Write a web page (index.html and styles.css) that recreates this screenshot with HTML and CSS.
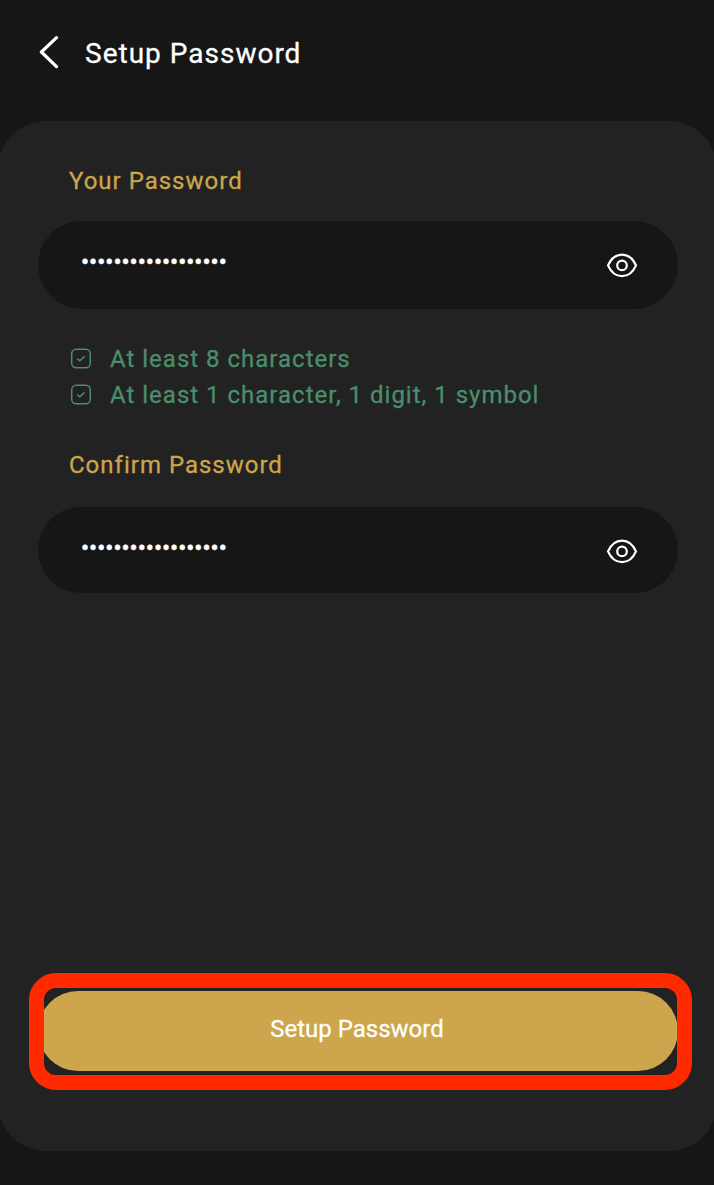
FILE: index.html
```html
<!DOCTYPE html>
<html lang="en">
<head>
    <meta charset="UTF-8">
    <meta name="viewport" content="width=device-width, initial-scale=1.0">
    <title>Setup Password</title>
    <link rel="stylesheet" href="styles.css">
</head>
<body>
    <header class="header">
        <svg class="back-icon" width="20" height="34" viewBox="0 0 20 34">
            <path d="M17.5 1.7L2.4 16L17.5 30.6" fill="none" stroke="#fff" stroke-width="3.2" stroke-linecap="round" stroke-linejoin="round"/>
        </svg>
        <h1 class="title">Setup Password</h1>
    </header>

    <main class="panel">
        <label class="label" for="password">Your Password</label>
        <div class="input-group">
            <input type="password" id="password" value="Secret-password-01">
            <svg class="eye-icon" width="32" height="26" viewBox="0 0 32 26">
                <path d="M2 13.4C5 6.6 10 2.6 16 2.6S27 6.6 30 13.4C27 20.2 22 24.2 16 24.2S5 20.2 2 13.4Z"/>
                <circle cx="16" cy="13.4" r="4.8"/>
            </svg>
        </div>

        <ul class="rules">
            <li>
                <svg class="check-icon" width="22" height="22" viewBox="0 0 22 22">
                    <rect x="1.7" y="1.2" width="18.6" height="18.6" rx="4.5"/>
                    <path d="M7.2 10.6L9.8 12.8L14.7 8.2"/>
                </svg>
                <span class="rule-text">At least 8 characters</span>
            </li>
            <li>
                <svg class="check-icon" width="22" height="22" viewBox="0 0 22 22">
                    <rect x="1.7" y="1.2" width="18.6" height="18.6" rx="4.5"/>
                    <path d="M7.2 10.6L9.8 12.8L14.7 8.2"/>
                </svg>
                <span class="rule-text">At least 1 character, 1 digit, 1 symbol</span>
            </li>
        </ul>

        <label class="label" for="confirm">Confirm Password</label>
        <div class="input-group confirm">
            <input type="password" id="confirm" value="Secret-password-01">
            <svg class="eye-icon" width="32" height="26" viewBox="0 0 32 26">
                <path d="M2 13.4C5 6.6 10 2.6 16 2.6S27 6.6 30 13.4C27 20.2 22 24.2 16 24.2S5 20.2 2 13.4Z"/>
                <circle cx="16" cy="13.4" r="4.8"/>
            </svg>
        </div>

        <div class="submit">
            <button class="submit-btn" type="button">Setup Password</button>
            <div class="highlight"></div>
        </div>
    </main>
</body>
</html>
```
FILE: styles.css
```css
* {
    box-sizing: border-box;
}
body {
    margin: 0;
    height: 1185px;
    background: #161616;
    color: #fff;
    font-family: Roboto, Arial, sans-serif;
    -webkit-text-stroke: 0.3px;
    overflow: hidden;
}
.header {
    display: flex;
    align-items: center;
    height: 121px;
    padding: 0 0 16px 39px;
}
.back-icon {
    margin-right: 26px;
}
.title {
    margin: 0;
    padding-top: 2px;
    font-size: 28px;
    font-weight: 400;
    letter-spacing: 1px;
}
.panel {
    display: flex;
    flex-direction: column;
    height: 1030px;
    margin: 0 -3px 0 -2px;
    padding: 44px 39px 80px 40px;
    background: #222;
    border-radius: 48px;
}
.label {
    height: 32px;
    margin: 0 0 24px 31px;
    line-height: 32px;
    font-size: 24px;
    letter-spacing: 1px;
    color: #cca54c;
}
.input-group {
    display: flex;
    align-items: center;
    height: 88px;
    padding: 0 40px 0 43px;
    background: #161616;
    border-radius: 44px;
}
.input-group input {
    flex: 1;
    padding: 0 0 6px;
    border: none;
    outline: none;
    background: none;
    color: #fff;
    font-family: Roboto, Arial, sans-serif;
    font-size: 24px;
    -webkit-text-stroke: 0.5px;
}
.confirm {
    height: 86px;
    margin-top: 2px;
    padding-top: 2px;
}
.eye-icon {
    fill: none;
    stroke: #fff;
    stroke-width: 2.2;
}
.rules {
    margin: 32px 0 36px 32px;
    padding: 0;
    list-style: none;
}
.rules li {
    display: flex;
    align-items: center;
    height: 36px;
}
.check-icon {
    margin-right: 18px;
    fill: none;
    stroke: #4b8e6c;
    stroke-width: 1.5;
}
.rule-text {
    font-size: 24px;
    letter-spacing: 1px;
    color: #4b8e6c;
}
.submit {
    position: relative;
    margin-top: auto;
}
.submit-btn {
    display: block;
    width: 100%;
    height: 80px;
    padding: 0 2px 4px 0;
    border: none;
    border-radius: 40px;
    background: #cca54c;
    color: #fff;
    font-family: Roboto, Arial, sans-serif;
    font-size: 24px;
    -webkit-text-stroke: 0.3px;
}
/* callout around the submit button */
.highlight {
    position: absolute;
    top: -18px;
    right: -14px;
    bottom: -19px;
    left: -9px;
    border: 15px solid #ff2a00;
    border-radius: 27px;
}
```
